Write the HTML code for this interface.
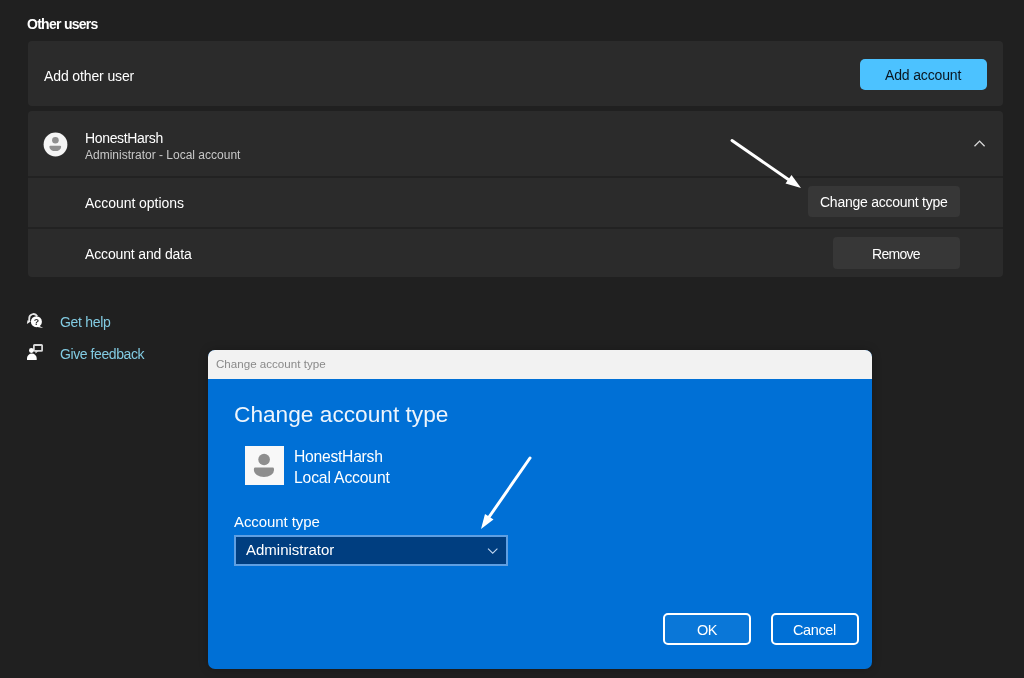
<!DOCTYPE html>
<html><head><meta charset="utf-8">
<style>
html,body{margin:0;padding:0;}
body{width:1024px;height:678px;overflow:hidden;background:#202020;position:relative;font-family:"Liberation Sans",sans-serif;color:#fff;}
.a{position:absolute;white-space:nowrap;}
.t{position:absolute;white-space:nowrap;line-height:1;will-change:transform;}
.card{position:absolute;background:#2b2b2b;}
.sep{position:absolute;background:#222222;}
.btn{position:absolute;border-radius:4px;}
</style></head><body>

<div class="t" style="left:27.3px;top:17px;font-size:14px;font-weight:bold;letter-spacing:-0.72px;">Other users</div>

<div class="card" style="left:28px;top:41px;width:975px;height:65px;border-radius:4px;"></div>
<div class="t" style="left:43.8px;top:69px;font-size:14px;letter-spacing:-0.12px;">Add other user</div>
<div class="btn" style="left:860px;top:59px;width:127px;height:31px;background:#4cc2ff;border-radius:5px;"></div>
<div class="t" style="left:885px;top:67.5px;font-size:14px;letter-spacing:-0.15px;color:#0a1620;">Add account</div>

<div class="card" style="left:28px;top:111px;width:975px;height:166px;border-radius:4px;"></div>
<div class="sep" style="left:28px;top:176px;width:975px;height:2px;"></div>
<div class="sep" style="left:28px;top:227px;width:975px;height:2px;"></div>

<!-- avatar -->
<svg class="a" style="left:43px;top:132px;" width="25" height="25" viewBox="0 0 25 25">
  <circle cx="12.5" cy="12.5" r="11.9" fill="#f5f5f5"/>
  <circle cx="12.4" cy="8.3" r="3.3" fill="#8f8f8f"/>
  <path d="M6.4 14.7 Q6.4 13.7 7.4 13.7 H17.1 Q18.1 13.7 18.1 14.7 V15.1 A5.85 4 0 0 1 6.4 15.1 Z" fill="#8f8f8f"/>
</svg>
<div class="t" style="left:85.3px;top:131.3px;font-size:14px;letter-spacing:-0.35px;">HonestHarsh</div>
<div class="t" style="left:85px;top:149px;font-size:12px;color:#c8c8c8;">Administrator - Local account</div>
<!-- chevron up -->
<svg class="a" style="left:972px;top:139px;" width="14" height="9" viewBox="0 0 14 9">
  <path d="M2.5 7.3 L7.6 2.1 L12.6 7.3" stroke="#dadada" stroke-width="1.3" fill="none"/>
</svg>

<div class="t" style="left:85.4px;top:196.2px;font-size:14px;letter-spacing:-0.05px;">Account options</div>
<div class="btn" style="left:808px;top:186px;width:152px;height:31px;background:#373737;"></div>
<div class="t" style="left:820px;top:194.5px;font-size:14px;letter-spacing:-0.25px;">Change account type</div>

<div class="t" style="left:85.4px;top:247.3px;font-size:14px;letter-spacing:-0.15px;">Account and data</div>
<div class="btn" style="left:833px;top:237px;width:127px;height:32px;background:#373737;"></div>
<div class="t" style="left:872px;top:246.7px;font-size:14px;letter-spacing:-0.7px;">Remove</div>

<!-- arrow top -->
<svg class="a" style="left:0;top:0;" width="1024" height="678" viewBox="0 0 1024 678">
  <line x1="732" y1="140.5" x2="792" y2="182" stroke="#fff" stroke-width="3" stroke-linecap="round"/>
  <path d="M801 188 L785.5 183.5 L791.5 175 Z" fill="#fff"/>
</svg>

<!-- help links -->
<svg class="a" style="left:24px;top:308px;" width="22" height="24" viewBox="0 0 22 24">
  <path d="M5.2 13.4 V10.5 A4.3 4.3 0 0 1 13.2 8.2" stroke="#e6e6e6" stroke-width="1.8" fill="none"/>
  <path d="M2.9 16 L3.5 12.3 L6.8 13.6 Z" fill="#f0f0f0"/>
  <circle cx="12.4" cy="13.7" r="5.5" fill="#fff"/>
  <path d="M14.6 17.5 L19.2 20.1 L13.2 19 Z" fill="#fff"/>
  <text x="12.4" y="16.9" font-size="8.8" font-family="Liberation Sans" font-weight="bold" text-anchor="middle" fill="#2a2a2a">?</text>
</svg>
<div class="t" style="left:59.5px;top:314.5px;font-size:14px;letter-spacing:-0.3px;color:#82cbe2;">Get help</div>

<svg class="a" style="left:24px;top:340px;" width="22" height="24" viewBox="0 0 22 24">
  <rect x="9.9" y="5" width="8.2" height="5.8" rx="0.6" fill="none" stroke="#d8d8d8" stroke-width="1.8"/>
  <path d="M11.1 10.4 L11.6 13.4 L14.8 10.7 Z" fill="#e0e0e0"/>
  <circle cx="7.4" cy="10.5" r="2.4" fill="#fff"/>
  <path d="M3 20 V18 A4.85 4.4 0 0 1 12.7 18 V20 Z" fill="#fff"/>
</svg>
<div class="t" style="left:59.5px;top:347px;font-size:14px;letter-spacing:-0.42px;color:#82cbe2;">Give feedback</div>

<!-- dialog -->
<div class="a" style="left:208px;top:350px;width:664px;height:319px;border-radius:7px;overflow:hidden;background:#0070d6;box-shadow:0 0 10px rgba(0,0,0,0.25);">
  <div class="a" style="left:0;top:0;width:664px;height:29px;background:#f2f2f2;"></div>
</div>
<div class="t" style="left:215.6px;top:358.1px;font-size:11.6px;color:#8a8a8a;">Change account type</div>
<div class="t" style="left:234px;top:402.5px;font-size:22.7px;color:#eef5fc;">Change account type</div>

<div class="a" style="left:245px;top:446px;width:39px;height:39px;background:#f8f8f8;"></div>
<svg class="a" style="left:245px;top:446px;" width="39" height="39" viewBox="0 0 39 39">
  <circle cx="19.1" cy="13.5" r="5.8" fill="#8e8e8e"/>
  <path d="M8.9 23 Q8.9 21.6 10.3 21.6 H27.6 Q29 21.6 29 23 V24.3 A10.05 6.7 0 0 1 8.9 24.3 Z" fill="#8e8e8e"/>
</svg>
<div class="t" style="left:293.8px;top:449px;font-size:15.7px;letter-spacing:-0.27px;">HonestHarsh</div>
<div class="t" style="left:293.8px;top:470px;font-size:15.7px;letter-spacing:-0.15px;">Local Account</div>
<div class="t" style="left:234.2px;top:513.5px;font-size:15px;letter-spacing:-0.08px;">Account type</div>

<div class="a" style="left:234px;top:535px;width:270px;height:27px;background:#003e80;border:2px solid #5f9fe2;"></div>
<div class="t" style="left:246px;top:542px;font-size:15px;">Administrator</div>
<svg class="a" style="left:486px;top:547px;" width="13" height="8" viewBox="0 0 13 8">
  <path d="M2 1.7 L6.7 6.2 L11.4 1.7" stroke="#c0d6ef" stroke-width="1.1" fill="none"/>
</svg>

<svg class="a" style="left:0;top:0;" width="1024" height="678" viewBox="0 0 1024 678">
  <line x1="530" y1="458" x2="487" y2="520" stroke="#fff" stroke-width="3" stroke-linecap="round"/>
  <path d="M481 529 L485 514 L493.5 519.5 Z" fill="#fff"/>
</svg>

<div class="btn" style="left:663px;top:613px;width:84px;height:28px;border:2px solid #fff;border-radius:5px;background:#0a77d8;"></div>
<div class="t" style="left:697.2px;top:622.7px;font-size:14.5px;letter-spacing:-0.5px;">OK</div>
<div class="btn" style="left:771px;top:613px;width:84px;height:28px;border:2px solid #fff;border-radius:5px;background:#0070d6;"></div>
<div class="t" style="left:792.8px;top:622.7px;font-size:14.5px;letter-spacing:-0.38px;">Cancel</div>

</body></html>
